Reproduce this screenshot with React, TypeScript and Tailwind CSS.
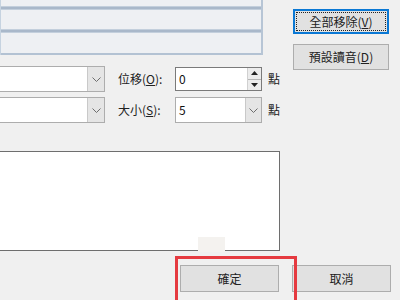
const font = "font-['Noto_Sans_CJK_TC','Noto_Sans',sans-serif]";

function Chevron() {
  return (
    <svg width="9" height="5" viewBox="0 0 9 5" className="block">
      <path d="M0.5 0.5 L4.5 4.5 L8.5 0.5" fill="none" stroke="#6d6d6d" strokeWidth="1" />
    </svg>
  );
}

function Stripe() {
  return (
    <div className="h-[4px] border-y border-[#c3cfdc] bg-[#a9b8ca]" />
  );
}

function Btn({ children, focused }: { children: React.ReactNode; focused?: boolean }) {
  if (focused) {
    return (
      <div className="h-[25px] w-[96px] border-2 border-[#0a78d4] bg-[#e1e1e1] p-[1px]">
        <div className="flex h-full w-full items-center justify-center border border-dotted border-[#222] text-[12px] text-[#222]">
          {children}
        </div>
      </div>
    );
  }
  return (
    <div className="flex h-[26px] w-[96px] items-center justify-center border border-[#adadad] bg-[#e1e1e1] text-[12px] text-[#222]">
      {children}
    </div>
  );
}

export default function App() {
  return (
    <div className={`relative h-[300px] w-[400px] overflow-hidden bg-[#f0f0f0] ${font}`}>
      <div className="flex">
        {/* Left column: list + combos */}
        <div className="w-[293px]">
          <div className="h-[55px] w-[263px] border-l border-r-2 border-[#c6d3e0] border-r-[#b7c5d5] bg-[#eef0f3]">
            <div className="h-[6px]" />
            <Stripe />
            <div className="h-[19px]" />
            <Stripe />
            <div className="h-[20px]" />
            <div className="h-[2px] bg-[#b3c2d3]" />
          </div>

          <div className="mt-[11px] flex h-[26px] items-center">
            <div className="flex h-[26px] w-[105px] border-y border-r border-[#adadad] bg-white">
              <div className="flex-1" />
              <div className="flex w-[17px] items-center justify-center border-l border-[#c9c9c9] bg-[#e5e5e5]">
                <Chevron />
              </div>
            </div>
            <div className="w-[70px] pl-[13px] text-[12px] text-[#222]">
              位移(<span className="underline">O</span>):
            </div>
            <div className="flex h-[24px] w-[87px] border border-[#7a7a7a] bg-white">
              <div className="flex-1 pl-[3px] text-[12px] leading-[22px] text-[#111]">0</div>
              <div className="flex w-[14px] flex-col border-l border-[#d0d0d0]">
                <div className="flex flex-1 items-center justify-center border-b border-[#b5b5b5] bg-[#ececec]">
                  <svg width="7" height="4" viewBox="0 0 7 4"><path d="M3.5 0 L7 4 L0 4 Z" fill="#222" /></svg>
                </div>
                <div className="flex flex-1 items-center justify-center bg-[#ececec]">
                  <svg width="7" height="4" viewBox="0 0 7 4"><path d="M0 0 L7 0 L3.5 4 Z" fill="#222" /></svg>
                </div>
              </div>
            </div>
            <div className="ml-[6px] text-[12px] text-[#222]">點</div>
          </div>

          <div className="mt-[5px] flex h-[26px] items-center">
            <div className="flex h-[26px] w-[105px] border-y border-r border-[#adadad] bg-white">
              <div className="flex-1" />
              <div className="flex w-[17px] items-center justify-center border-l border-[#c9c9c9] bg-[#e5e5e5]">
                <Chevron />
              </div>
            </div>
            <div className="w-[70px] pl-[13px] text-[12px] text-[#222]">
              大小(<span className="underline">S</span>):
            </div>
            <div className="flex h-[26px] w-[87px] border border-[#adadad] bg-white">
              <div className="flex-1 pl-[3px] text-[12px] leading-[24px] text-[#111]">5</div>
              <div className="flex w-[16px] items-center justify-center border-l border-[#c9c9c9] bg-[#e5e5e5]">
                <Chevron />
              </div>
            </div>
            <div className="ml-[6px] text-[12px] text-[#222]">點</div>
          </div>
        </div>

        {/* Right column: buttons */}
        <div className="flex flex-col gap-[10px] pt-[9px]">
          <Btn focused>
            全部移除(<span className="underline">V</span>)
          </Btn>
          <Btn>
            預設讀音(<span className="underline">D</span>)
          </Btn>
        </div>
      </div>

      {/* Preview box */}
      <div className="mt-[28px] h-[100px] w-[280px] border-y border-r border-[#6e6e6e] bg-white" />

      {/* Bottom buttons */}
      <div className="mt-[14px] flex gap-[13px] pl-[180px]">
        <div className="flex h-[27px] w-[99px] items-center justify-center border border-[#adadad] bg-[#e1e1e1] text-[12px] text-[#222]">
          確定
        </div>
        <div className="flex h-[27px] w-[99px] items-center justify-center border border-[#adadad] bg-[#e1e1e1] text-[12px] text-[#222]">
          取消
        </div>
      </div>

      {/* Overlays */}
      <div className="absolute left-[198px] top-[237px] h-[15px] w-[27px] bg-[#f4f2ef]" />
      <div className="absolute left-[175px] top-[256px] h-[50px] w-[122px] border-[3px] border-[#e53a40]" />
    </div>
  );
}
